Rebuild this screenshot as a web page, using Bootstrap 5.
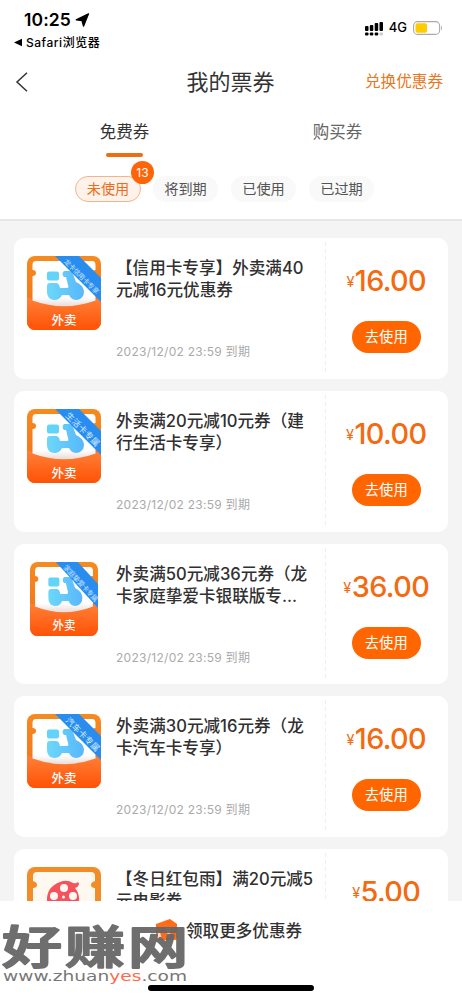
<!DOCTYPE html>
<html lang="zh-CN">
<head>
<meta charset="utf-8">
<meta name="viewport" content="width=device-width, initial-scale=1">
<title>我的票券</title>
<link rel="stylesheet" href="https://cdn.jsdelivr.net/npm/bootstrap@5.3.0/dist/css/bootstrap.min.css">
<style>
body{font-family:Inter,"Noto Sans CJK SC",sans-serif;color:#333;background:#f4f4f4;overflow:hidden}
svg{display:block;flex:none}
svg text{font-family:Inter,"Noto Sans CJK SC",sans-serif}
.screen{width:462px;height:1000px;overflow:hidden}
.status-line{height:56px;padding:9px 19px 0 13px;color:#000}
.clock{font-size:17.5px;font-weight:600;line-height:22px;margin-left:11px;letter-spacing:.1px}
.back-app{font-size:12px;font-weight:500;line-height:23px;letter-spacing:.52px}
.title-line{height:50px;padding:1px 19px 0 15px}
.page-title{font-size:22px;line-height:50px;font-weight:400;padding-left:3px}
.redeem{font-size:15.6px;color:#e87722;line-height:50px}
.side{width:120px}
.tabs-line{height:54px;padding:0 18px}
.tab-item{font-size:16.5px;line-height:24px;width:213px;padding-top:14px;text-align:center;color:#666}
.tab-item.on{color:#333}
.tab-item.on::after{content:"";display:block;width:37px;height:4px;border-radius:2px;background:#ec6d14;margin:9px auto 0}
.filters{height:61px;padding:16px 0 0 75px;gap:13px;border-bottom:2px solid #e6e6e6}
.chip{width:65px;height:26px;border-radius:13px;background:#f9f9f9;font-size:14.2px;line-height:25px;text-align:center;color:#555}
.chip.on{background:#fff2ea;border:1px solid #f3b48c;color:#e8701b;line-height:23px;width:66px;margin-right:-1px}
.count{top:-16px;right:-14px;width:23px;height:23px;border-radius:50%;background:#ff6409;color:#fff;font-size:12px;line-height:23px}
.list{height:680px;padding:17px 14px 0;gap:12px;overflow:hidden}
.coupon{height:140.8px;width:433.5px;border-radius:10px;background:#fff;flex:none}
.pic{width:102px;padding:18px 0 0 13px;flex:none}
.info{width:209px;padding-top:19px;flex:none}
.name{font-size:16.6px;font-weight:500;line-height:22px;height:44px;white-space:nowrap;color:#303030}
.until{font-size:12px;color:#aaa;line-height:18px;margin-top:42px;letter-spacing:.27px}
.cut{width:1px;height:132px;margin-top:4px;background:repeating-linear-gradient(#eee 0 4px,#fff 4px 7px);flex:none}
.pay{padding:25px 1px 0 0}
.price{font-size:28.8px;line-height:36px;height:36px;font-weight:500;color:#f36a10;letter-spacing:-.6px}
.price small{font-size:14.500px;font-weight:400;margin-right:1px;position:relative;top:-4px}
.use{width:69px;height:32px;border-radius:16px;background:#ff6600;color:#fff;font-size:14.3px;line-height:32px;margin-top:22px}
.more{height:99px;padding-top:13px;font-size:16.6px;line-height:34px;font-weight:500;z-index:2}
.more-icon{margin-left:155px;margin-right:8px}
.home{left:148px;top:84px;width:166px;height:6px;border-radius:3px;background:#000}
.stamp{left:0;top:16px}
</style>
</head>
<body>
<svg width="0" height="0" class="position-absolute" aria-hidden="true">
<defs>
<linearGradient id="edge" x2="0" y2="1"><stop stop-color="#f58b20"/><stop offset="1" stop-color="#f36b19"/></linearGradient>
<linearGradient id="bowl" x2="0" y2="1"><stop stop-color="#ff8138"/><stop offset="1" stop-color="#ff5206"/></linearGradient>
<linearGradient id="bike" x2="1"><stop stop-color="#6cd8f8"/><stop offset="1" stop-color="#58b7fc"/></linearGradient>
<linearGradient id="paper" x2="0" y2="1"><stop offset=".8" stop-color="#fff"/><stop offset="1" stop-color="#e9dcd8"/></linearGradient>
<clipPath id="tile"><rect width="74" height="74" rx="8"/></clipPath>
<symbol id="takeout" viewBox="0 0 74 74" preserveAspectRatio="none">
<g clip-path="url(#tile)">
<rect width="74" height="74" fill="url(#edge)"/>
<path d="M0 41Q37 60 74 41V74H0z" fill="url(#bowl)"/>
<path d="M9 5H65q3.500 0 3.500 4v5q-3.500 0-3.500 3t3.500 3V44.500Q37 56 5.500 44.500V20q3.500 0 3.500-3t-3.500-3V9q0-4 3.500-4z" fill="url(#paper)"/>
<rect x="20" y="15.500" width="12" height="9" rx="2" fill="#62d4f9"/>
<path d="M37 15h5q3 0 4 3l3 8q7 3 8 9 0 8-7 9-6 0-8-5h-7q-2 5-8 5-7-1-7-8v-6q0-3 3-3h6q3 0 4 5h7q2 0 1-3l-2-8h-2q-3-3 0-6z" fill="url(#bike)"/>
<path d="M28 0H52L74 22V46z" fill="#298df0"/>
<text x="37" y="68.500" text-anchor="middle" font-size="12.5" font-weight="500" fill="#fff">外卖</text>
</g>
</symbol>
</defs>
</svg>

<div class="screen d-flex flex-column">
<header class="bg-white">
  <div class="status-line d-flex justify-content-between">
    <div>
      <div class="clock d-flex align-items-center">10:25
        <svg class="ms-1" width="15" height="14" viewBox="0 0 15 14"><path d="M13.500 .8L1.200 6.800 7 7.500 8.500 13.200z" fill="#000" stroke="#000" stroke-width="1.300" stroke-linejoin="round"/></svg></div>
      <div class="back-app d-flex align-items-center"><svg class="me-1" width="9" height="9" viewBox="0 0 9 9"><path d="M1 4.500L9 .7V8.300z"/></svg>Safari浏览器</div>
    </div>
    <div class="d-flex align-items-center" style="height:38px">
      <svg width="20" height="15" viewBox="0 0 20 15"><g fill="#000"><rect x="1" y="5" width="3.500" height="5" rx="1"/><rect x="5.800" y="4" width="3.500" height="6" rx="1"/><rect x="10.700" y="2" width="3.500" height="8" rx="1"/><rect x="15.500" y="1" width="3.500" height="9" rx="1"/><rect x="1" y="11.500" width="3.500" height="3" rx="1"/><rect x="5.800" y="11.500" width="3.500" height="3" rx="1"/><rect x="10.700" y="11.500" width="3.500" height="3" rx="1"/></g><rect x="15.500" y="11.500" width="3.500" height="3" rx="1" fill="#ccc"/></svg>
      <span style="font-size:13px;font-weight:500;margin:0 6px 0 5px">4G</span>
      <svg width="30" height="14" viewBox="0 0 30 14"><rect x=".6" y=".6" width="26" height="12.800" rx="4" fill="#fff" stroke="#aaa" stroke-width="1.100"/><rect x="2.500" y="2.300" width="11.500" height="9.400" rx="2" fill="#fc0"/><path d="M28 4.500q2 2.500 0 5z" fill="#aaa"/></svg>
    </div>
  </div>
  <div class="title-line d-flex justify-content-between align-items-center">
    <div class="side"><svg width="14" height="20" viewBox="0 0 14 20"><path d="M12 .8L2 10l10 9.200" fill="none" stroke="#333" stroke-width="1.500"/></svg></div>
    <h1 class="page-title m-0">我的票券</h1>
    <div class="side redeem text-end">兑换优惠券</div>
  </div>
  <nav class="tabs-line d-flex"><div class="tab-item on">免费券</div><div class="tab-item">购买券</div></nav>
  <div class="filters d-flex">
    <div class="chip on position-relative">未使用<span class="count position-absolute">13</span></div>
    <div class="chip">将到期</div><div class="chip">已使用</div><div class="chip">已过期</div>
  </div>
</header>

<main class="list d-flex flex-column">
  <article class="coupon d-flex">
    <div class="pic"><svg width="74" height="74" viewBox="0 0 74 74"><use href="#takeout" width="74" height="74"/><text transform="translate(36.500 6) rotate(45)" font-size="6.800" textLength="46" fill="#c4e4ff">龙卡信用卡专享</text></svg></div>
    <div class="info"><div class="name">【信用卡专享】外卖满40<br>元减16元优惠券</div><div class="until">2023/12/02 23:59 到期</div></div>
    <div class="cut"></div>
    <div class="pay flex-fill d-flex flex-column align-items-center"><div class="price"><small>¥</small>16.00</div><button class="use border-0 p-0">去使用</button></div>
  </article>
  <article class="coupon d-flex">
    <div class="pic"><svg width="74" height="74" viewBox="0 0 74 74"><use href="#takeout" width="74" height="74"/><text transform="translate(38 7) rotate(45)" font-size="8.500" textLength="44" fill="#d5edff">生活卡专属</text></svg></div>
    <div class="info"><div class="name">外卖满20元减10元券（建<br>行生活卡专享）</div><div class="until">2023/12/02 23:59 到期</div></div>
    <div class="cut"></div>
    <div class="pay flex-fill d-flex flex-column align-items-center"><div class="price"><small>¥</small>10.00</div><button class="use border-0 p-0">去使用</button></div>
  </article>
  <article class="coupon d-flex">
    <div class="pic"><svg width="74" height="74" viewBox="0 0 74 74"><use href="#takeout" x="3" width="68" height="74"/><text transform="translate(36 6) rotate(47)" font-size="7" textLength="47" fill="#c4e4ff">家庭挚爱卡专属</text></svg></div>
    <div class="info"><div class="name">外卖满50元减36元券（龙<br>卡家庭挚爱卡银联版专...</div><div class="until">2023/12/02 23:59 到期</div></div>
    <div class="cut"></div>
    <div class="pay flex-fill d-flex flex-column align-items-center"><div class="price"><small>¥</small>36.00</div><button class="use border-0 p-0">去使用</button></div>
  </article>
  <article class="coupon d-flex">
    <div class="pic"><svg width="74" height="74" viewBox="0 0 74 74"><use href="#takeout" width="74" height="74"/><text transform="translate(38 7) rotate(45)" font-size="8.500" textLength="44" fill="#d5edff">汽车卡专属</text></svg></div>
    <div class="info"><div class="name">外卖满30元减16元券（龙<br>卡汽车卡专享）</div><div class="until">2023/12/02 23:59 到期</div></div>
    <div class="cut"></div>
    <div class="pay flex-fill d-flex flex-column align-items-center"><div class="price"><small>¥</small>16.00</div><button class="use border-0 p-0">去使用</button></div>
  </article>
  <article class="coupon d-flex">
    <div class="pic"><svg width="74" height="74" viewBox="0 0 74 74"><g clip-path="url(#tile)"><rect width="74" height="74" fill="#f28c26"/><path d="M10 5H64q4 0 4 4v5q-4 1-4 4t4 3V74H6V21q4 0 4-3t-4-4V9q0-4 4-4z" fill="#fff8f0"/><path d="M20 35q-1-15 13-20 7-3 13 1 5 1 4-1l2 1q0 4-4 5 5 6 4 14z" fill="#f6525d"/><g fill="#fff8f0"><circle cx="37" cy="21" r="4"/><circle cx="27" cy="29" r="4"/><circle cx="46" cy="29" r="4"/><circle cx="36.500" cy="30" r="1.500"/></g></g></svg></div>
    <div class="info"><div class="name">【冬日红包雨】满20元减5<br>元电影券</div></div>
    <div class="cut"></div>
    <div class="pay flex-fill d-flex flex-column align-items-center"><div class="price"><small>¥</small>5.00</div></div>
  </article>
</main>

<footer class="more bg-white position-relative d-flex align-items-start">
  <svg class="more-icon mt-1" width="23" height="24" viewBox="0 0 23 24"><path d="M1 6L15 1l7 5v14q0 2-2 2H3q-2 0-2-2z" fill="#ff6b18"/><path d="M4 10l3 12H2zM11 10h5l-2 12z" fill="#ffe0cd"/></svg>
  <span>领取更多优惠券</span>
  <svg class="stamp position-absolute" width="195" height="75" viewBox="0 0 195 75">
    <text transform="translate(2 46.500) scale(1 .75)" font-size="60" font-weight="500" textLength="186" fill="#666" stroke="#666" stroke-width="2.600" stroke-linejoin="round" opacity=".94">好赚网</text>
    <text y="64" x="3" font-size="14.500" fill="#777" textLength="184" lengthAdjust="spacingAndGlyphs" style="font-family:'DejaVu Sans',sans-serif">www.zhuan<tspan fill="#ff694b">yes</tspan>.com</text>
  </svg>
  <div class="home position-absolute"></div>
</footer>
</div>
<script src="https://cdn.jsdelivr.net/npm/bootstrap@5.3.0/dist/js/bootstrap.bundle.min.js"></script>
</body>
</html>
